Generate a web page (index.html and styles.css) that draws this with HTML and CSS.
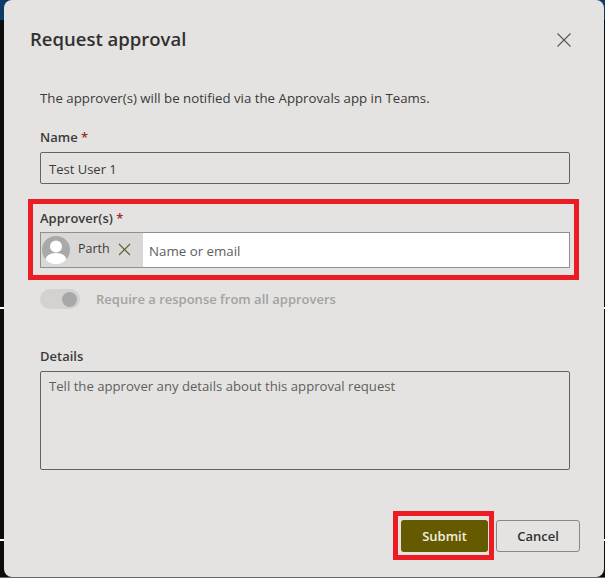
FILE: index.html
```html
<!DOCTYPE html>
<html lang="en">
<head>
    <meta charset="UTF-8">
    <meta name="viewport" content="width=device-width, initial-scale=1.0">
    <title>Request approval</title>
    <link rel="stylesheet" href="styles.css">
</head>
<body>
    <div class="dialog">
        <div class="dialog-header">
            <h1>Request approval</h1>
            <button class="close-button" aria-label="Close">
                <svg width="16" height="16" viewBox="0 0 16 16"><path d="M1.500 1.500l13 13M14.500 1.500l-13 13" stroke="#555" stroke-width="1.100" fill="none"/></svg>
            </button>
        </div>

        <p class="intro">The approver(s) will be notified via the Approvals app in Teams.</p>

        <div class="field name-field">
            <label>Name <span class="required">*</span></label>
            <div class="text-input">Test User 1</div>
        </div>

        <div class="field approver-field">
            <label>Approver(s) <span class="required">*</span></label>
            <div class="people-picker">
                <div class="chip">
                    <svg class="avatar" width="28" height="28" viewBox="0 0 28 28">
                        <circle cx="14" cy="14" r="14" fill="#a9a9a9"/>
                        <circle cx="14" cy="10.500" r="6" fill="#fff"/>
                        <path d="M3.500 23.500c1-4.500 5-6.500 10.500-6.500s9.500 2 10.500 6.500a14 14 0 0 1-21 0z" fill="#fff"/>
                    </svg>
                    <span class="chip-name">Parth</span>
                    <svg class="chip-remove" width="13" height="13" viewBox="0 0 13 13"><path d="M1 1l11 11M12 1l-11 11" stroke="#5f5f33" stroke-width="1.100" fill="none"/></svg>
                </div>
                <span class="placeholder">Name or email</span>
            </div>
        </div>

        <div class="toggle-row">
            <span class="toggle"><span class="toggle-knob"></span></span>
            <span class="toggle-label">Require a response from all approvers</span>
        </div>

        <div class="field details-field">
            <label>Details</label>
            <div class="text-area">Tell the approver any details about this approval request</div>
        </div>

        <div class="dialog-footer">
            <div class="submit-highlight">
                <button class="btn btn-primary">Submit</button>
            </div>
            <button class="btn btn-default">Cancel</button>
        </div>
    </div>
</body>
</html>
```

FILE: styles.css
```css
html, body {
    margin: 0;
    height: 100%;
}

/* dark page behind the dialog, with the bits that show at its edges */
body {
    background: linear-gradient(#0d3a66 0 20px, #0c0c0c 20px 307px, #fff 307px 309px, #0c0c0c 309px 539px, #fff 539px 541px, #0c0c0c 541px 577px, #666 577px);
    color: #3b3a39;
    font-family: "Open Sans", "Noto Sans", Arial, sans-serif;
    font-size: 13px;
    overflow: hidden;
}

.dialog {
    box-sizing: border-box;
    width: 600px;
    height: 577px;
    margin-left: 4px;
    padding: 0 34px 0 36px;
    background: #e4e3e1;
    border-radius: 8px;
}

.dialog-header {
    display: flex;
    justify-content: space-between;
    align-items: center;
    height: 78px;
    margin-left: -10px;
}

.dialog-header h1 {
    margin: -2px 0 0;
    font-size: 18.500px;
    font-weight: 600;
    color: #323130;
}

.close-button {
    display: flex;
    margin: 2px -2px 0 0;
    padding: 0;
    border: none;
    background: none;
}

.intro {
    margin: 11px 0 0;
    line-height: 18px;
    font-size: 13.250px;
}

.field label {
    display: block;
    font-weight: 600;
    line-height: 18px;
}

.required {
    color: #a4262c;
}

.name-field {
    margin-top: 21px;
}

.text-input {
    box-sizing: border-box;
    height: 32px;
    margin-top: 6px;
    padding: 1px 8px 0;
    border: 1px solid #636363;
    border-radius: 2px;
    line-height: 30px;
}

.approver-field {
    box-sizing: border-box;
    width: 551px;
    height: 81px;
    margin: 15px 0 0 -12px;
    padding: 5px 4px 0 7px;
    border: 5px solid #ed1c24;
}

.people-picker {
    display: flex;
    align-items: stretch;
    box-sizing: border-box;
    height: 36px;
    margin-top: 5px;
    border: 1px solid #8f8f8f;
    background: #fff;
}

.chip {
    display: flex;
    align-items: center;
    box-sizing: border-box;
    width: 102px;
    padding-left: 1px;
    background: #d9d8d6;
}

.chip-name {
    margin-left: 8px;
    margin-top: -3px;
    font-size: 12.500px;
}

.chip-remove {
    margin: -2px 0 0 8px;
}

.placeholder {
    margin-left: 6px;
    line-height: 36px;
    font-size: 13.300px;
    color: #605e5c;
}

.toggle-row {
    display: flex;
    align-items: center;
    margin-top: 9px;
}

.toggle {
    display: flex;
    align-items: center;
    justify-content: flex-end;
    box-sizing: border-box;
    width: 40px;
    height: 20px;
    padding-right: 3px;
    border-radius: 10px;
    background: #d3d2d0;
}

.toggle-knob {
    width: 15px;
    height: 15px;
    border-radius: 50%;
    background: #a8a8a8;
}

.toggle-label {
    margin-left: 16px;
    font-weight: 600;
    color: #a3a2a0;
}

.details-field {
    margin-top: 38px;
}

.text-area {
    box-sizing: border-box;
    height: 99px;
    margin-top: 6px;
    padding: 5px 8px;
    border: 1px solid #636363;
    border-radius: 2px;
    font-size: 13.150px;
    color: #605e5c;
    line-height: 18px;
}

.dialog-footer {
    display: flex;
    justify-content: flex-end;
    align-items: center;
    margin: 41px -10px 0 0;
}

.submit-highlight {
    box-sizing: border-box;
    width: 101px;
    height: 49px;
    padding: 4px 1px 0 3px;
    border: 5px solid #ed1c24;
}

.btn {
    box-sizing: border-box;
    height: 32px;
    padding: 0;
    border-radius: 3px;
    font-family: inherit;
    font-size: 13px;
    font-weight: 600;
}

.btn-primary {
    width: 87px;
    border: none;
    background: #665a00;
    color: #f1efe0;
}

.btn-default {
    width: 84px;
    margin-left: 2px;
    border: 1px solid #8a8886;
    background: #e4e3e1;
    color: #323130;
}
```
